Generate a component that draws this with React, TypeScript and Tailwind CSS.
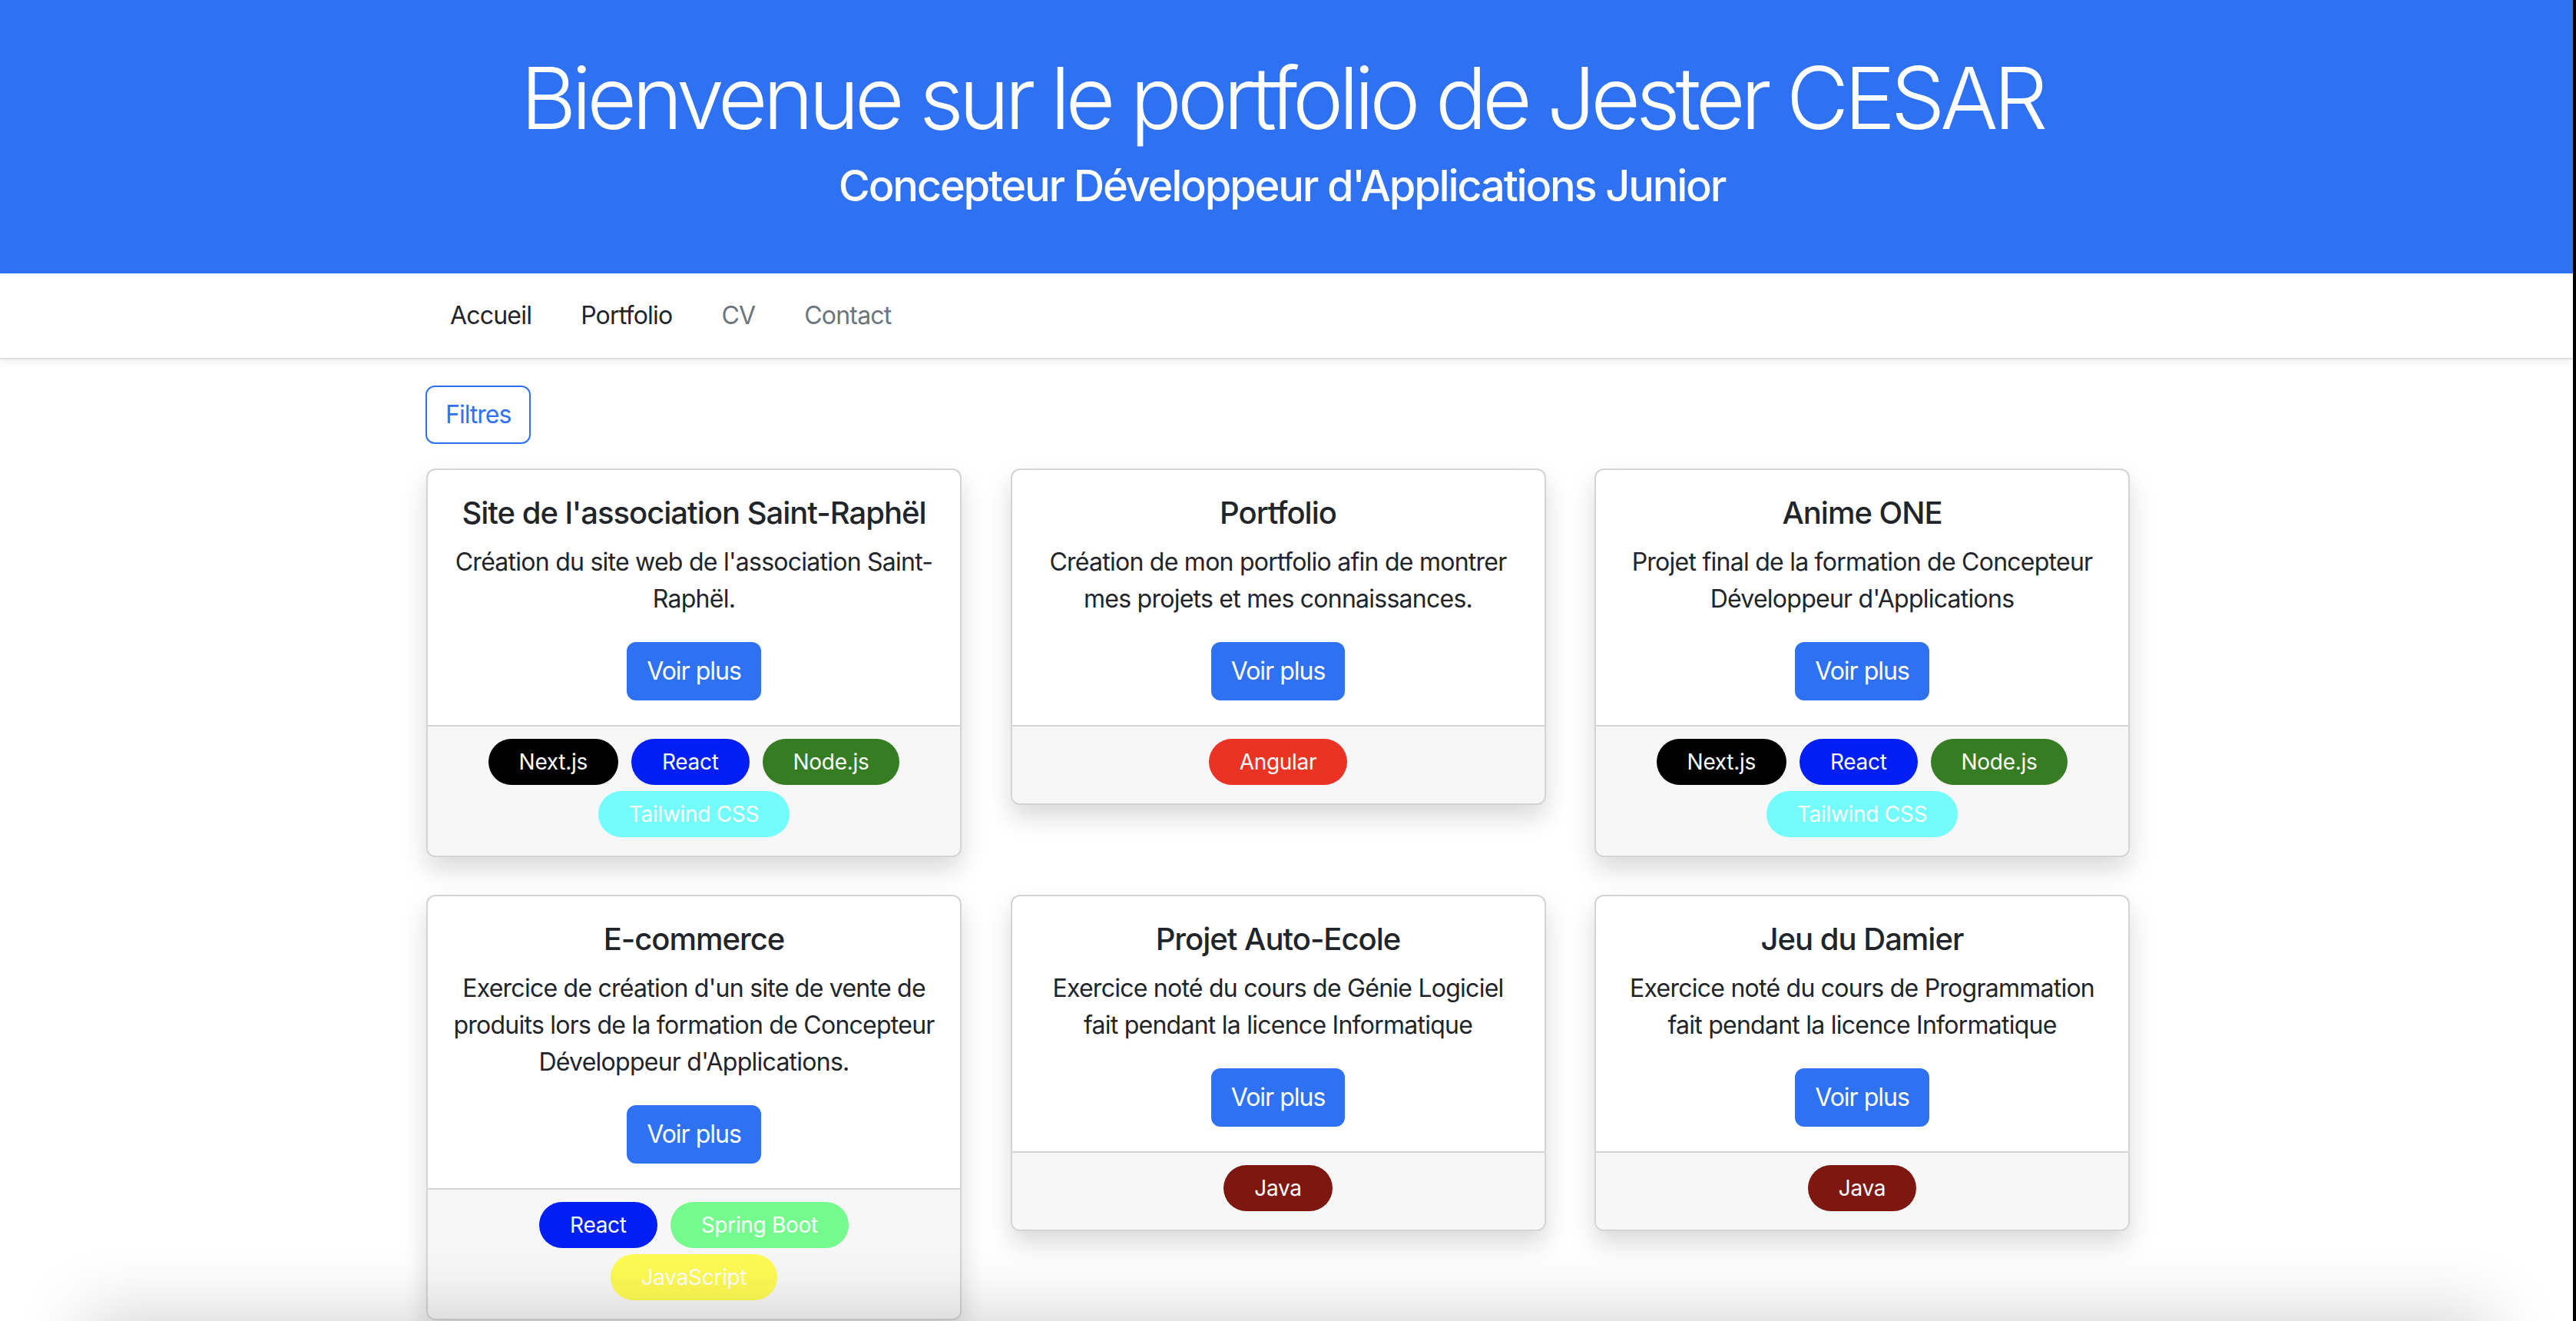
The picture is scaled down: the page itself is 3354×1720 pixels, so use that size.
import React from 'react'

type Tag = { label: string; color: string }

const TAGS: Record<string, Tag> = {
  next: { label: 'Next.js', color: 'bg-[#000000]' },
  react: { label: 'React', color: 'bg-[#001ff5]' },
  node: { label: 'Node.js', color: 'bg-[#367c23]' },
  tailwind: { label: 'Tailwind CSS', color: 'bg-[#73fcfc]' },
  angular: { label: 'Angular', color: 'bg-[#ea3323]' },
  java: { label: 'Java', color: 'bg-[#7e1710]' },
  spring: { label: 'Spring Boot', color: 'bg-[#75fb8d]' },
  js: { label: 'JavaScript', color: 'bg-[#fefb54]' },
}

// les retours à la ligne suivent la maquette
const projects = [
  {
    title: "Site de l'association Saint-Raphël",
    text: "Création du site web de l'association Saint-\nRaphël.",
    tags: ['next', 'react', 'node', 'tailwind'],
  },
  {
    title: 'Portfolio',
    text: 'Création de mon portfolio afin de montrer\nmes projets et mes connaissances.',
    tags: ['angular'],
  },
  {
    title: 'Anime ONE',
    text: "Projet final de la formation de Concepteur\nDéveloppeur d'Applications",
    tags: ['next', 'react', 'node', 'tailwind'],
  },
  {
    title: 'E-commerce',
    text: "Exercice de création d'un site de vente de\nproduits lors de la formation de Concepteur\nDéveloppeur d'Applications.",
    tags: ['react', 'spring', 'js'],
  },
  {
    title: 'Projet Auto-Ecole',
    text: 'Exercice noté du cours de Génie Logiciel\nfait pendant la licence Informatique',
    tags: ['java'],
  },
  {
    title: 'Jeu du Damier',
    text: 'Exercice noté du cours de Programmation\nfait pendant la licence Informatique',
    tags: ['java'],
  },
]

const navLinks = [
  { label: 'Accueil', active: true },
  { label: 'Portfolio', active: true },
  { label: 'CV', active: false },
  { label: 'Contact', active: false },
]

function ProjectCard({ p }: { p: (typeof projects)[number] }) {
  return (
    <div className="bg-white border-2 border-[#d4d4d4] rounded-[12px] shadow-[0_16px_32px_rgba(0,0,0,0.15)] overflow-hidden">
      {/* corps de la carte */}
      <div className="p-[32px] flex flex-col items-center text-center">
        <h5 className="text-[40px] leading-[48px] font-medium text-[#212529] mb-[16px] tracking-[-1px]">{p.title}</h5>
        <p className="text-[32px] leading-[48px] text-[#212529] mb-[32px] -mx-[6px] tracking-[-0.75px] whitespace-pre-line">
          {p.text}
        </p>
        <button className="bg-[#2e72f3] text-white text-[32px] leading-[48px] px-[24px] py-[12px] border-2 border-[#2e72f3] rounded-[12px] tracking-[-1px]">
          Voir plus
        </button>
      </div>
      {/* techno utilisées */}
      <div className="bg-[#f7f7f7] border-t-2 border-[#d4d4d4] pt-[16px] pb-[16px] px-[32px] flex flex-wrap justify-center gap-x-[17px]">
        {p.tags.map((t) => (
          <span
            key={t}
            className={`${TAGS[t].color} text-white text-[28px] h-[60px] px-[40px] mb-[8px] rounded-full flex items-center tracking-[-0.3px]`}
          >
            {TAGS[t].label}
          </span>
        ))}
      </div>
    </div>
  )
}

export default function App() {
  return (
    <div className="relative h-[1720px] overflow-hidden flex bg-white font-['Inter','Noto_Sans',sans-serif]">
      <div className="flex-1 flex flex-col">
        {/* HEADER */}
        <header className="shrink-0 bg-[#2e72f3] text-white text-center pt-[60px] pr-[12px] h-[356px]">
          <h1 className="text-[112px] leading-[134px] font-light mb-[15px] tracking-[-6.2px]">
            Bienvenue sur le portfolio de Jester CESAR
          </h1>
          <h3 className="text-[56px] leading-[67px] font-medium tracking-[-2.2px]">
            Concepteur Développeur d'Applications Junior
          </h3>
        </header>

        {/* NAV */}
        <nav className="shrink-0 bg-white h-[112px] border-b-2 border-[#dcdfe3] shadow-[0_4px_10px_rgba(0,0,0,0.06)] relative z-10">
          <div className="w-[2242px] mx-auto h-full flex items-center">
            {navLinks.map((l) => (
              <a
                key={l.label}
                className={`px-[32px] text-[32px] leading-[48px] tracking-[-0.8px] ${l.active ? 'text-[#212529]' : 'text-[#6c757d]'}`}
              >
                {l.label}
              </a>
            ))}
          </div>
        </nav>

        {/* CONTENU */}
        <main className="shrink-0 w-[2242px] mx-auto">
          <button className="mt-[34px] border-2 border-[#2e72f3] text-[#2e72f3] rounded-[12px] px-[24px] py-[12px] text-[32px] leading-[48px] tracking-[-1px]">
            Filtres
          </button>

          <div className="mt-[32px] grid grid-cols-[repeat(3,697px)] gap-x-[63.5px] gap-y-[49px] items-start pl-[1px]">
            {projects.map((p) => (
              <ProjectCard key={p.title} p={p} />
            ))}
          </div>
        </main>
      </div>

      {/* bord de fenêtre */}
      <div className="w-[4px] bg-black" />

      {/* ombre du pied de page */}
      <div className="absolute left-[120px] right-[120px] top-full h-[100px] shadow-[0_0_90px_10px_rgba(0,0,0,0.17)] pointer-events-none" />
    </div>
  )
}
